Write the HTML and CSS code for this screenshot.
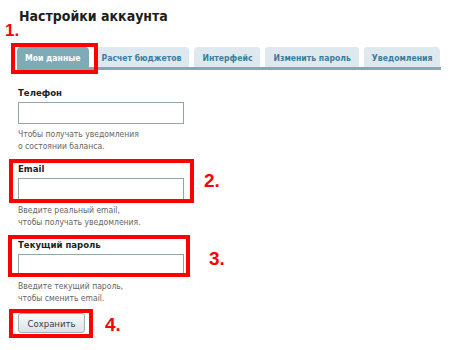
FILE: index.html
```html
<!DOCTYPE html>
<html lang="ru">
<head>
    <meta charset="UTF-8">
    <meta name="viewport" content="width=device-width, initial-scale=1.0">
    <title>Настройки аккаунта</title>
    <link rel="stylesheet" href="styles.css">
</head>
<body>
    <div class="page">
        <h1 class="title">Настройки аккаунта</h1>

        <ul class="tabs">
            <li class="tab active">Мои данные</li>
            <li class="tab">Расчет бюджетов</li>
            <li class="tab">Интерфейс</li>
            <li class="tab">Изменить пароль</li>
            <li class="tab">Уведомления</li>
        </ul>

        <form class="account-form">
            <div class="field">
                <label for="phone">Телефон</label>
                <input type="text" id="phone">
                <p class="hint">Чтобы получать уведомления<br>о состоянии баланса.</p>
            </div>
            <div class="field">
                <label for="email">Email</label>
                <input type="email" id="email">
                <p class="hint">Введите реальный email,<br>чтобы получать уведомления.</p>
            </div>
            <div class="field">
                <label for="password">Текущий пароль</label>
                <input type="password" id="password">
                <p class="hint">Введите текущий пароль,<br>чтобы сменить email.</p>
            </div>
            <button type="submit" class="save-btn">Сохранить</button>
        </form>

        <!-- annotation marks -->
        <span class="mark mark-1">1.</span>
        <div class="frame frame-1"></div>
        <span class="mark mark-2">2.</span>
        <div class="frame frame-2"></div>
        <span class="mark mark-3">3.</span>
        <div class="frame frame-3"></div>
        <span class="mark mark-4">4.</span>
        <div class="frame frame-4"></div>
    </div>
</body>
</html>
```
FILE: styles.css
```css
:root {
    --tab-active: #7eabb6;
    --tab-bg: #dde9ee;
    --tab-text: #3b7c9c;
    --mark-color: #ff0000;
}

body {
    margin: 0;
    background: #ffffff;
    font-family: "DejaVu Sans Condensed", "DejaVu Sans", sans-serif;
    color: #222;
}

.page {
    position: relative;
    width: 456px;
    height: 350px;
    padding: 8px 0 0 18px;
    box-sizing: border-box;
}

.title {
    margin: 0 0 22px 1px;
    font-size: 14px;
    line-height: 17px;
    font-weight: bold;
    color: #1e1e1e;
}

.tabs {
    display: flex;
    gap: 5px;
    list-style: none;
    margin: 0 0 0 -1px;
    padding: 0;
    width: 424px;
    border-bottom: 3px solid var(--tab-active);
}

.tab {
    height: 20px;
    padding: 2px 8px 0;
    box-sizing: border-box;
    line-height: 18px;
    font-size: 8.6px;
    font-weight: bold;
    color: var(--tab-text);
    background: var(--tab-bg);
    border-radius: 4px 4px 0 0;
    white-space: nowrap;
}

.tab.active {
    background: var(--tab-active);
    color: #ffffff;
}

.account-form {
    padding-top: 17px;
}

.field + .field {
    margin-top: 11px;
}

.field label {
    display: block;
    margin-bottom: 3px;
    font-size: 9.5px;
    line-height: 12px;
    font-weight: bold;
    color: #222;
}

.field input {
    display: block;
    width: 166px;
    height: 22px;
    box-sizing: border-box;
    margin: 0;
    padding: 0 3px;
    border: 1px solid #8fa6ab;
    background: #ffffff;
}

.hint {
    margin: 4px 0 0;
    font-size: 8.5px;
    line-height: 12px;
    color: #666;
}

.save-btn {
    display: block;
    margin-top: 9px;
    width: 67px;
    height: 20px;
    padding: 0;
    font-family: inherit;
    font-size: 9.5px;
    color: #2c3e4a;
    border: 1px solid #9fb1b7;
    border-radius: 3px;
    background: linear-gradient(#f8fafb, #dbe3e6);
}

.mark {
    position: absolute;
    font-family: "Liberation Sans", Arial, sans-serif;
    font-size: 19px;
    font-weight: bold;
    line-height: 1;
    color: var(--mark-color);
}

.mark-1 { left: 5px; top: 22px; font-size: 17px; }
.mark-2 { left: 204px; top: 171px; }
.mark-3 { left: 209px; top: 249px; }
.mark-4 { left: 105px; top: 315px; }

.frame {
    position: absolute;
    border: 4px solid var(--mark-color);
    box-sizing: border-box;
}

.frame-1 { left: 11px; top: 43px; width: 87px; height: 31px; }
.frame-2 { left: 9px; top: 159px; width: 185px; height: 44px; }
.frame-3 { left: 8px; top: 235px; width: 182px; height: 42px; }
.frame-4 { left: 9px; top: 309px; width: 84px; height: 29px; }
```
